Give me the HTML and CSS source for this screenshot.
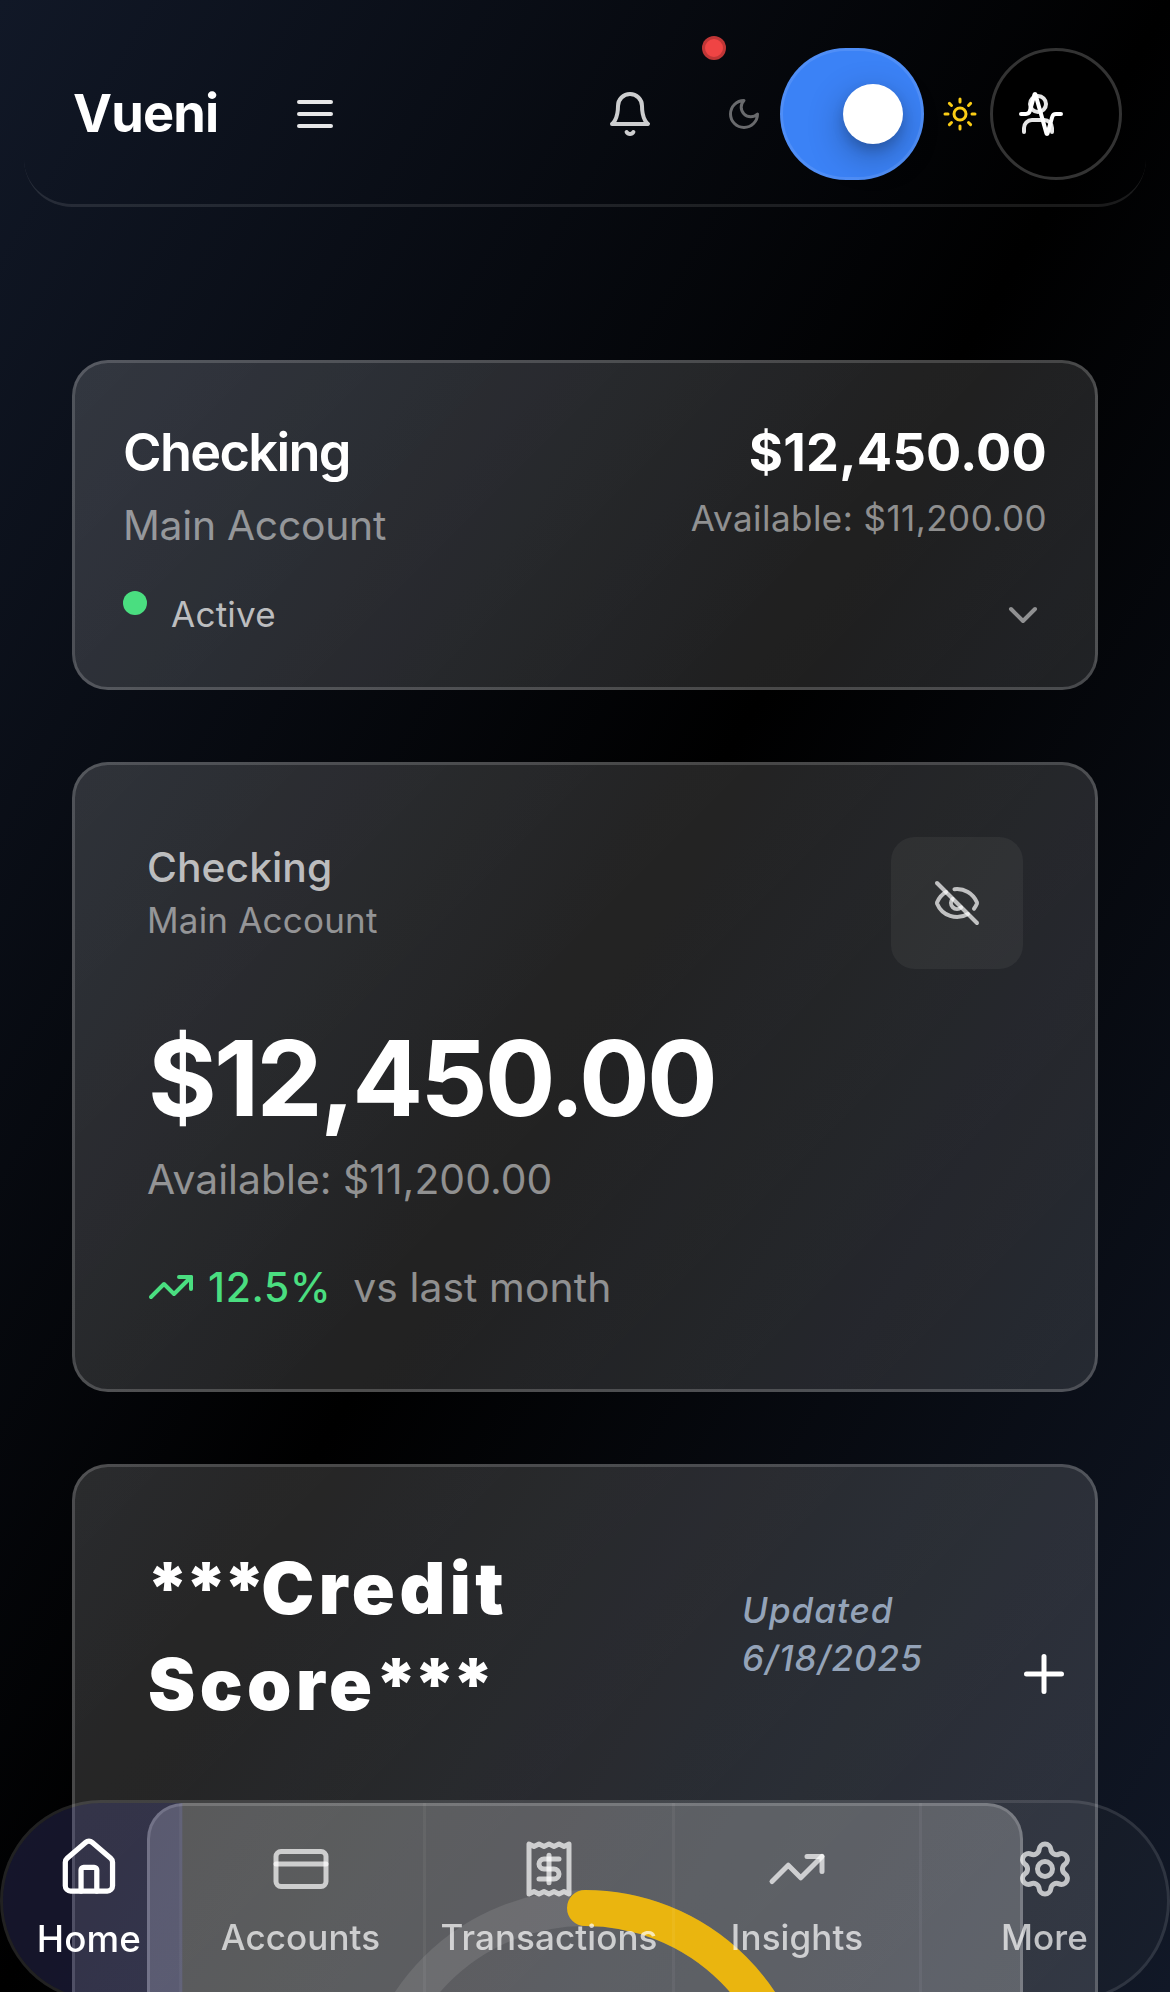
FILE: index.html
```
<!DOCTYPE html>
<html lang="en">
<head>
<meta charset="utf-8">
<title>Vueni</title>
<link rel="stylesheet" href="styles.css">
</head>
<body>
<header class="topbar">
  <div class="logo">Vueni</div>
  <button class="icon-btn menu" aria-label="Menu"><svg class="icon" viewBox="0 0 24 24"><path d="M4 6h16M4 12h16M4 18h16"/></svg></button>
  <div class="actions">
    <button class="icon-btn bell" aria-label="Notifications"><svg class="icon" viewBox="0 0 24 24"><path d="M6 8a6 6 0 0 1 12 0c0 7 3 9 3 9H3s3-2 3-9"/><path d="M10.3 21a1.94 1.94 0 0 0 3.4 0"/></svg><span class="badge"></span></button>
    <svg class="icon icon-sm moon" viewBox="0 0 24 24"><path d="M12 3a6 6 0 0 0 9 9 9 9 0 1 1-9-9Z"/></svg>
    <button class="toggle" aria-label="Theme"><span class="knob"></span></button>
    <svg class="icon icon-sm sun" viewBox="0 0 24 24"><circle cx="12" cy="12" r="4"/><path d="M12 2v2M12 20v2M4.93 4.93l1.41 1.41M17.66 17.66l1.41 1.41M2 12h2M20 12h2M6.34 17.66l-1.41 1.41M19.07 4.93l-1.41 1.41"/></svg>
    <button class="profile" aria-label="Profile">
      <svg class="icon user" viewBox="0 0 24 24"><path d="M19 21v-2a4 4 0 0 0-4-4H9a4 4 0 0 0-4 4v2"/><circle cx="12" cy="7" r="4"/></svg>
      <svg class="icon pulse" viewBox="0 0 24 24"><path d="M22 12h-2.48a2 2 0 0 0-1.93 1.46l-2.35 8.36a.25.25 0 0 1-.48 0L9.24 2.18a.25.25 0 0 0-.48 0l-2.35 8.36A2 2 0 0 1 4.49 12H2"/></svg>
    </button>
  </div>
</header>

<main class="content">
  <section class="card account">
    <div class="account-top">
      <div>
        <h2 class="account-name">Checking</h2>
        <p class="account-type">Main Account</p>
      </div>
      <div class="account-figures">
        <p class="account-balance">$12,450.00</p>
        <p class="account-available">Available: $11,200.00</p>
      </div>
    </div>
    <div class="account-status">
      <span class="dot"></span>
      <span class="status-label">Active</span>
      <svg class="icon chevron" viewBox="0 0 24 24"><path d="m6 9 6 6 6-6"/></svg>
    </div>
  </section>

  <section class="card balance">
    <div class="balance-head">
      <div>
        <h3 class="balance-name">Checking</h3>
        <p class="balance-type">Main Account</p>
      </div>
      <button class="hide-btn" aria-label="Hide balance"><svg class="icon" viewBox="0 0 24 24"><path d="M10.733 5.076a10.744 10.744 0 0 1 11.205 6.575 1 1 0 0 1 0 .696 10.747 10.747 0 0 1-1.444 2.49"/><path d="M14.084 14.158a3 3 0 0 1-4.242-4.242"/><path d="M17.479 17.499a10.75 10.75 0 0 1-15.417-5.151 1 1 0 0 1 0-.696 10.75 10.75 0 0 1 4.446-5.143"/><path d="m2 2 20 20"/></svg></button>
    </div>
    <p class="amount">$12,450.00</p>
    <p class="available">Available: $11,200.00</p>
    <div class="trend">
      <svg class="icon" viewBox="0 0 24 24"><path d="M22 7 13.5 15.5 8.5 10.5 2 17"/><path d="M16 7h6v6"/></svg>
      <span class="percent">12.5%</span>
      <span class="period">vs last month</span>
    </div>
  </section>

  <section class="card score">
    <div class="score-head">
      <h2 class="score-title"><span class="stars">***</span>Credit<br>Score<span class="stars">***</span></h2>
      <p class="updated">Updated<br>6/18/2025</p>
      <svg class="icon plus" viewBox="0 0 24 24"><path d="M5 12h14M12 5v14"/></svg>
    </div>
    <div class="gauge">
      <svg class="ring" viewBox="0 0 456 456"><circle class="ring-track" cx="228" cy="228" r="210"/><circle class="ring-value" cx="228" cy="228" r="210" pathLength="100" stroke-dasharray="72 100" transform="rotate(-90 228 228)"/></svg>
    </div>
  </section>
</main>

<nav class="tabbar">
  <a class="tab active"><svg class="icon" viewBox="0 0 24 24"><path d="M15 21v-8a1 1 0 0 0-1-1h-4a1 1 0 0 0-1 1v8"/><path d="M3 10a2 2 0 0 1 .709-1.528l7-5.999a2 2 0 0 1 2.582 0l7 5.999A2 2 0 0 1 21 10v9a2 2 0 0 1-2 2H5a2 2 0 0 1-2-2z"/></svg><span>Home</span></a>
  <a class="tab"><svg class="icon" viewBox="0 0 24 24"><rect x="2" y="5" width="20" height="14" rx="2"/><path d="M2 10h20"/></svg><span>Accounts</span></a>
  <a class="tab"><svg class="icon" viewBox="0 0 24 24"><path d="M4 2v20l2-1 2 1 2-1 2 1 2-1 2 1 2-1 2 1V2l-2 1-2-1-2 1-2-1-2 1-2-1-2 1Z"/><path d="M16 8h-6a2 2 0 1 0 0 4h4a2 2 0 1 1 0 4H8"/><path d="M12 17.5v-11"/></svg><span>Transactions</span></a>
  <a class="tab"><svg class="icon" viewBox="0 0 24 24"><path d="M22 7 13.5 15.5 8.5 10.5 2 17"/><path d="M16 7h6v6"/></svg><span>Insights</span></a>
  <a class="tab"><svg class="icon" viewBox="0 0 24 24"><path d="M9.671 4.136a2.34 2.34 0 0 1 4.659 0 2.34 2.34 0 0 0 3.319 1.915 2.34 2.34 0 0 1 2.33 4.033 2.34 2.34 0 0 0 0 3.831 2.34 2.34 0 0 1-2.33 4.033 2.34 2.34 0 0 0-3.319 1.915 2.34 2.34 0 0 1-4.659 0 2.34 2.34 0 0 0-3.32-1.915 2.34 2.34 0 0 1-2.33-4.033 2.34 2.34 0 0 0 0-3.831A2.34 2.34 0 0 1 6.35 6.051a2.34 2.34 0 0 0 3.319-1.915"/><circle cx="12" cy="12" r="3"/></svg><span>More</span></a>
</nav>
</body>
</html>
```
FILE: styles.css
```
* { box-sizing: border-box; margin: 0; padding: 0; }

html, body { height: 1992px; overflow: hidden; }

body {
  font-family: Inter, "Liberation Sans", sans-serif;
  font-size: 35px;
  color: #fff;
  background: linear-gradient(to bottom right, #111827 0%, #000 50%, #111827 100%);
}

button { background: none; border: 0; color: inherit; font: inherit; }

.icon {
  display: block;
  flex: none;
  width: 48px;
  height: 48px;
  fill: none;
  stroke: currentColor;
  stroke-width: 2;
  stroke-linecap: round;
  stroke-linejoin: round;
  overflow: visible;
}
.icon-sm { width: 36px; height: 36px; }

/* Header */
.topbar {
  display: flex;
  align-items: center;
  height: 183px;
  margin: 24px 24px 0;
  padding: 0 24px 0 48px;
  border-bottom: 3px solid rgba(255, 255, 255, .1);
  border-radius: 48px;
}
.logo { width: 176px; margin: -2px 0 0 1px; font-size: 52.3px; line-height: 66px; font-weight: 700; letter-spacing: -.8px; }
.icon-btn {
  display: flex;
  align-items: center;
  justify-content: center;
  width: 132px;
  height: 132px;
  position: relative;
}
.menu { color: rgba(255, 255, 255, .9); }
.bell { color: rgba(255, 255, 255, .8); margin-right: 30px; }
.badge {
  position: absolute;
  left: 138px;
  top: -12px;
  width: 24px;
  height: 24px;
  border-radius: 50%;
  background: #ef4444;
  border: 3px solid rgba(0, 0, 0, .2);
}
.actions { display: flex; align-items: center; margin-left: auto; }
.moon { color: rgba(255, 255, 255, .4); }
.sun { color: #facc15; margin-right: 12px; }
.toggle {
  display: flex;
  align-items: center;
  justify-content: flex-end;
  width: 144px;
  height: 132px;
  margin: 0 18px;
  padding-right: 18px;
  border: 3px solid rgba(255, 255, 255, .1);
  border-radius: 66px;
  background: #3b82f6;
}
.knob {
  width: 60px;
  height: 60px;
  border-radius: 50%;
  background: #fff;
  box-shadow: 0 12px 36px rgba(0, 0, 0, .3), 0 6px 12px rgba(0, 0, 0, .15);
}
.profile {
  position: relative;
  width: 132px;
  height: 132px;
  border: 3px solid #333;
  border-radius: 50%;
  background: #000;
}
.profile .icon { position: absolute; top: 39px; }
.user { left: 21px; color: rgba(255, 255, 255, .9); }
.pulse { left: 24px; }

/* Cards */
.content {
  display: flex;
  flex-direction: column;
  gap: 72px;
  padding: 153px 72px 0;
}
.card {
  border: 3px solid rgba(255, 255, 255, .18);
  border-radius: 36px;
  background: linear-gradient(135deg, rgba(255, 255, 255, .155), rgba(255, 255, 255, .115));
}

.account { height: 330px; padding: 48px; }
.account-top { display: flex; justify-content: space-between; }
.account-figures { text-align: right; }
.account-name, .account-balance { font-size: 52.3px; line-height: 82px; font-weight: 600; }
.account-name { letter-spacing: -1.65px; }
.account-balance { font-weight: 700; letter-spacing: .2px; }
.account-type { margin-top: 2px; font-size: 40.8px; line-height: 60px; letter-spacing: -.25px; color: rgba(255, 255, 255, .5); }
.account-available { margin-top: 1px; line-height: 48px; letter-spacing: .45px; color: rgba(255, 255, 255, .5); }
.account-status { display: flex; align-items: center; height: 48px; margin-top: 36px; }
.dot { align-self: flex-start; width: 24px; height: 24px; margin-right: 24px; border-radius: 50%; background: #4ade80; }
.status-label { margin-top: -2px; line-height: 46px; letter-spacing: .25px; color: rgba(255, 255, 255, .7); }
.chevron { margin-left: auto; color: rgba(255, 255, 255, .5); }

.balance { height: 630px; padding: 72px; }
.balance-head { display: flex; justify-content: space-between; height: 132px; }
.balance-name { font-size: 40.8px; line-height: 60px; font-weight: 500; letter-spacing: .05px; color: rgba(255, 255, 255, .7); }
.balance-type { line-height: 46px; letter-spacing: .2px; color: rgba(255, 255, 255, .5); }
.hide-btn {
  display: flex;
  align-items: center;
  justify-content: center;
  width: 132px;
  height: 132px;
  border-radius: 24px;
  background: rgba(255, 255, 255, .05);
  color: rgba(255, 255, 255, .7);
}
.amount { margin: 55px 0 0 1px; font-size: 105px; line-height: 108px; font-weight: 700; letter-spacing: -2.75px; }
.available { margin-top: 17px; font-size: 40.8px; line-height: 60px; letter-spacing: .05px; color: rgba(255, 255, 255, .5); }
.trend { display: flex; align-items: center; margin-top: 48px; font-size: 40.8px; line-height: 60px; color: #4ade80; }
.percent { margin-left: 13px; font-weight: 500; letter-spacing: .7px; }
.period { margin-left: 22px; letter-spacing: .1px; color: rgba(255, 255, 255, .5); }

.score { height: 900px; padding: 73px 0 0 72px; }
.score-head { display: grid; grid-template-columns: 595px 272px 60px; align-items: center; }
.score-title { padding-left: 1px; font-size: 71px; line-height: 96px; font-weight: 900; letter-spacing: 4.5px; }
.stars { margin-left: -2px; letter-spacing: -4.8px; }
.updated { margin-top: -4px; line-height: 48px; font-weight: 500; font-style: italic; letter-spacing: 1px; color: #94a3b8; }
.plus { width: 60px; height: 60px; align-self: end; margin-bottom: 28px; }
.gauge {
  width: 876px;
  height: 660px;
  margin-top: 71px;
  padding-top: 84px;
  border: 3px solid rgba(255, 255, 255, .17);
  border-radius: 36px;
  background: rgba(255, 255, 255, .22);
}
.ring { display: block; width: 456px; height: 456px; margin: 0 auto; fill: none; stroke-width: 36; }
.ring-track { stroke: rgba(255, 255, 255, .1); }
.ring-value { stroke: #eab308; stroke-linecap: round; }

/* Bottom navigation */
.tabbar {
  position: fixed;
  left: 0;
  bottom: -10px;
  display: grid;
  grid-template-columns: 175px 248px 249px 247px 245px;
  width: 1170px;
  height: 202px;
  border: 3px solid rgba(255, 255, 255, .1);
  border-radius: 101px;
  background: rgba(255, 255, 255, .03);
  overflow: hidden;
}
.tab {
  display: flex;
  flex-direction: column;
  align-items: center;
  gap: 14px;
  padding-top: 36px;
  border-right: 3px solid rgba(255, 255, 255, .05);
  color: rgba(255, 255, 255, .7);
  font-weight: 500;
  line-height: 48px;
  letter-spacing: .1px;
}
.tab:last-child { border-right: 0; }
.tab .icon { width: 60px; height: 60px; }
.tab.active {
  transform: scale(1.05);
  background: rgba(99, 102, 241, .15);
  color: #fff;
}
```
